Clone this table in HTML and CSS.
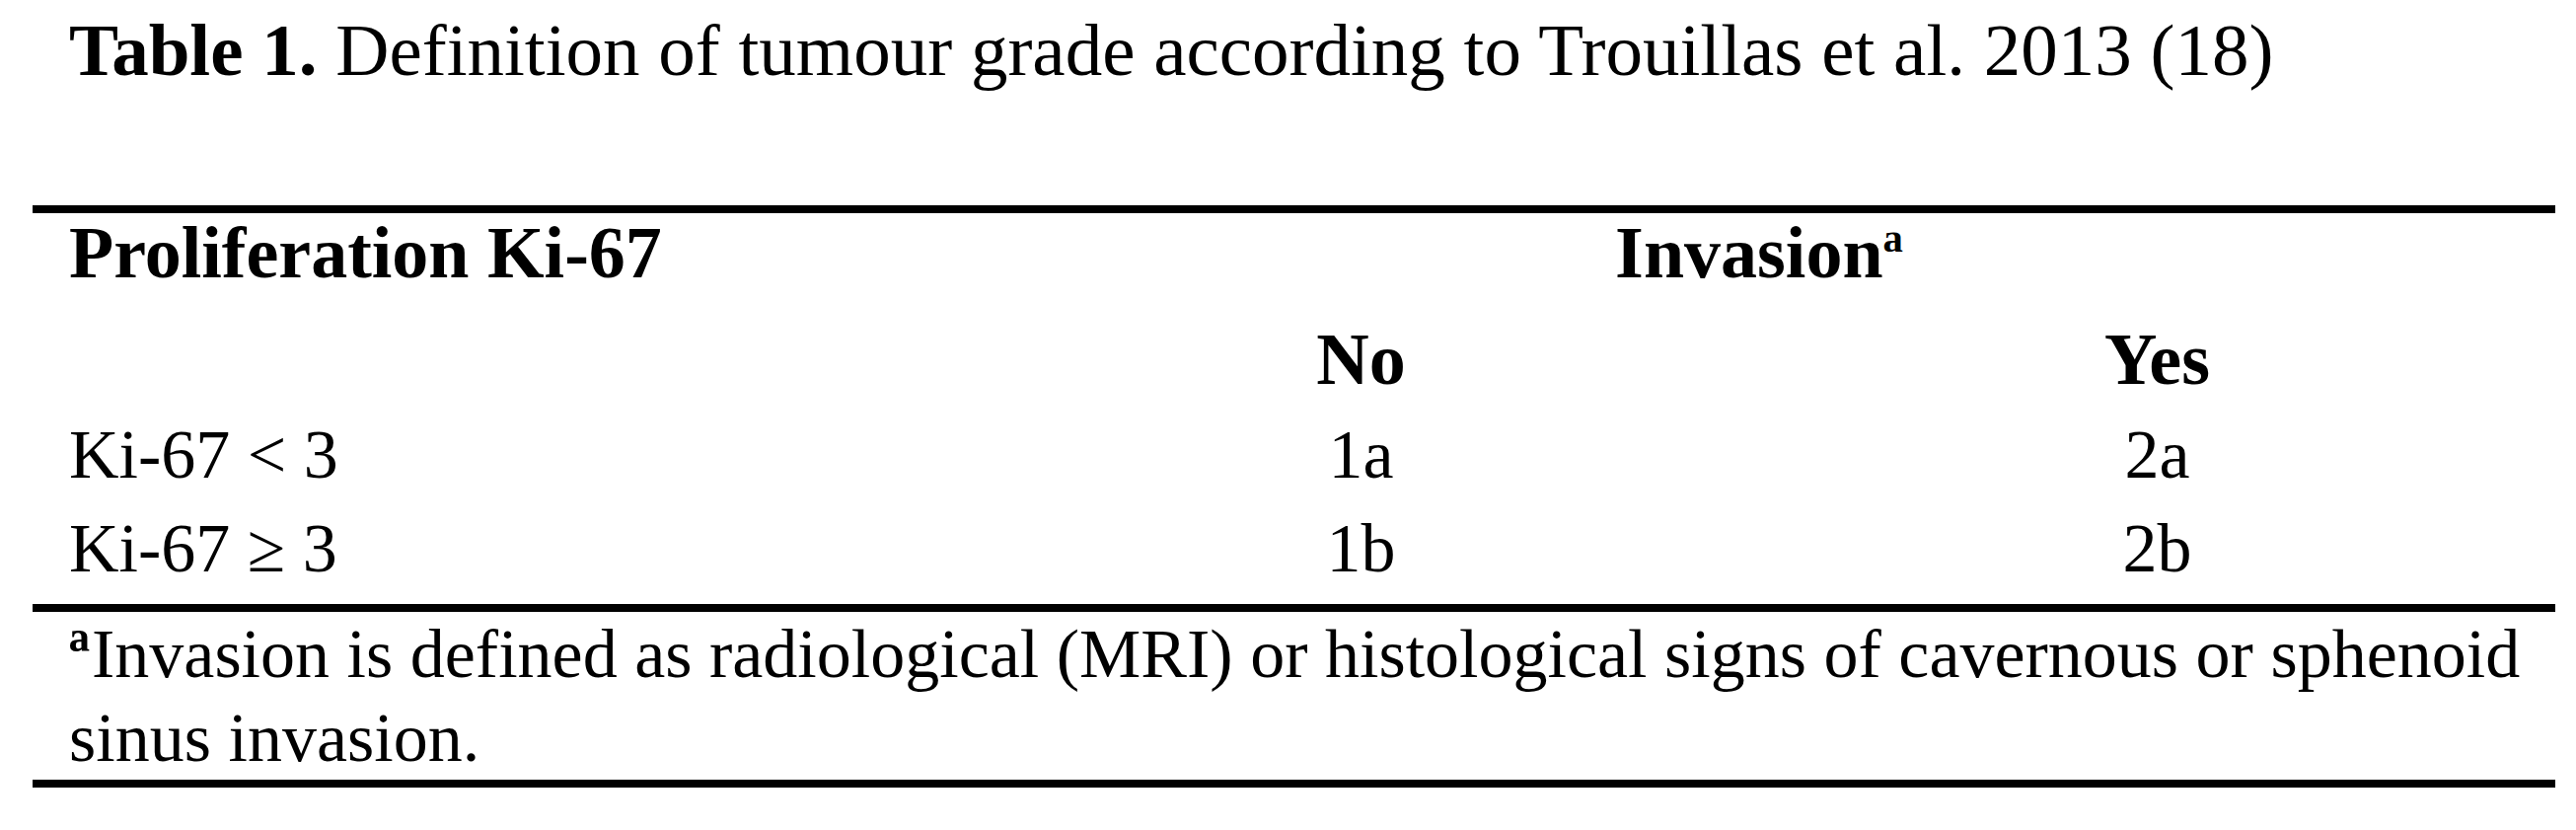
FILE: index.html
```html
<!DOCTYPE html>
<html lang="en">
<head>
    <meta charset="UTF-8">
    <title>Table 1</title>
    <link rel="stylesheet" href="styles.css">
</head>
<body>
    <p class="caption"><b>Table 1.</b> Definition of tumour grade according to Trouillas et al. 2013 (18)</p>
    <table class="grade">
        <thead>
            <tr class="head-top">
                <th class="label">Proliferation Ki-67</th>
                <th colspan="2">Invasion<sup>a</sup></th>
            </tr>
            <tr class="head-sub">
                <th class="label"></th>
                <th>No</th>
                <th>Yes</th>
            </tr>
        </thead>
        <tbody>
            <tr class="row-one">
                <td class="label">Ki-67 &lt; 3</td>
                <td>1a</td>
                <td>2a</td>
            </tr>
            <tr class="row-two">
                <td class="label">Ki-67 ≥ 3</td>
                <td>1b</td>
                <td>2b</td>
            </tr>
        </tbody>
        <tfoot>
            <tr>
                <td class="note" colspan="3"><b class="mark">ª</b>Invasion is defined as radiological (MRI) or histological signs of cavernous or sphenoid sinus invasion.</td>
            </tr>
        </tfoot>
    </table>
</body>
</html>
```

FILE: styles.css
```css
body {
    margin: 0;
    background: #FFFFFF;
    color: #000000;
    font-family: 'Liberation Serif', serif;
}
.caption {
    margin: 0 0 112px 0;
    padding: 6px 0 0 70px;
    font-size: 75px;
    line-height: 90px;
}
.grade {
    width: 2557px;
    margin-left: 33px;
    border-collapse: collapse;
    border-top: 8px solid #000;
    border-bottom: 8px solid #000;
    table-layout: fixed;
}
.grade th, .grade td {
    padding: 0;
    line-height: 80px;
    text-align: center;
    vertical-align: top;
}
.grade th {
    font-size: 74px;
}
.grade td {
    font-size: 70px;
}
.grade .label {
    width: 906px;
    padding-left: 37px;
    text-align: left;
}
.grade sup {
    font-size: 0.55em;
    line-height: 1;
}
.head-top th {
    padding-bottom: 28px;
}
.head-sub th {
    padding-bottom: 17px;
}
.row-one td {
    padding-bottom: 15px;
}
.row-two td {
    padding-bottom: 16px;
}
.grade .note {
    border-top: 8px solid #000;
    padding: 0 8px 0 37px;
    font-size: 70px;
    line-height: 85px;
    text-align: left;
}
.note .mark {
    margin-right: 2px;
}
```
